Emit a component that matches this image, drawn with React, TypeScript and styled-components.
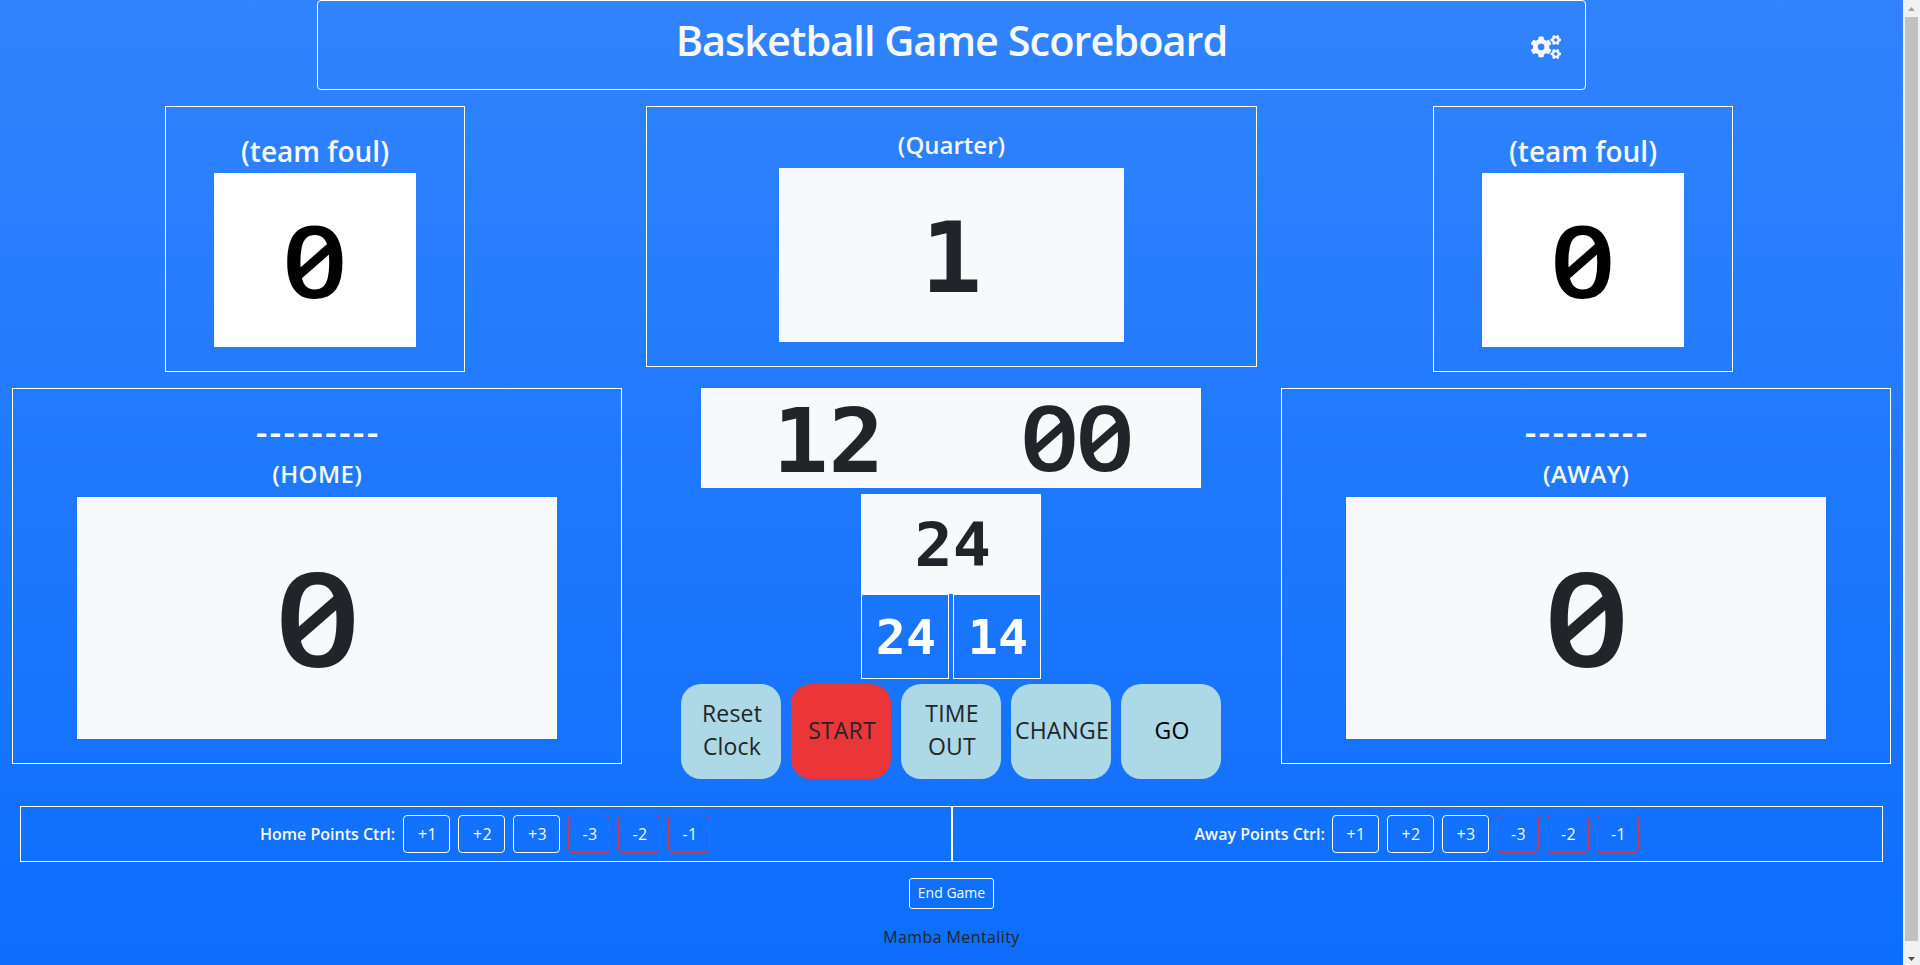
import React from "react";
import styled, { createGlobalStyle } from "styled-components";
import { FaCogs } from "react-icons/fa";

const GlobalStyle = createGlobalStyle`
  *, *::before, *::after { box-sizing: border-box; }
  html, body { margin: 0; height: 965px; overflow: hidden; }
  body {
    font-family: "Open Sans", "Noto Sans", sans-serif;
    font-size: 16px;
    line-height: 1.5;
    color: #212529;
  }
  button { font-family: inherit; }
`;

const Window = styled.div`
  display: flex;
  height: 965px;
  width: 1920px;
`;

const Page = styled.main`
  width: 1903px;
  height: 965px;
  display: flex;
  flex-direction: column;
  align-items: center;
  background: #0d6efd linear-gradient(180deg, rgba(255, 255, 255, 0.15), rgba(255, 255, 255, 0));
`;

const ScrollTrack = styled.div`
  width: 17px;
  height: 965px;
  background: #f1f1f1;
  display: flex;
  flex-direction: column;
  align-items: center;
  justify-content: space-between;
  padding: 7px 0 4px;
`;

const ScrollThumb = styled.div`
  width: 13px;
  height: 924px;
  margin: 6px 0 auto;
  background: #c1c1c1;
`;

const Arrow = styled.svg<{ $color: string }>`
  display: block;
  width: 7px;
  height: 4px;
  fill: ${(p) => p.$color};
`;

const Header = styled.header`
  width: 1269px;
  height: 90px;
  border: 1px solid #fff;
  border-radius: 4px;
  display: grid;
  grid-template-columns: 80px 1fr 80px;
  color: #f8f9fa;
`;

const Title = styled.h1`
  grid-column: 2;
  margin: 0;
  padding-top: 14px;
  text-align: center;
  font-size: 41.5px;
  line-height: 50px;
  font-weight: 600;
  letter-spacing: -1px;
`;

const Settings = styled.div`
  padding: 34px 0 0 26px;
  line-height: 0;
`;

const SettingsIcon = styled(FaCogs)`
  width: 30px;
  height: 24px;
`;

const TopRow = styled.section`
  width: 1903px;
  display: grid;
  grid-template-columns: 630px 643px 620px;
  justify-items: center;
  align-items: start;
  margin-top: 16px;
`;

const Panel = styled.div<{ $w: number; $h: number; $pt: number }>`
  width: ${(p) => p.$w}px;
  height: ${(p) => p.$h}px;
  padding-top: ${(p) => p.$pt}px;
  border: 1px solid #fff;
  display: flex;
  flex-direction: column;
  align-items: center;
  color: #f8f9fa;
`;

const Label = styled.div<{ $size: number; $h: number; $lh: number; $ls?: number }>`
  font-size: ${(p) => p.$size}px;
  line-height: ${(p) => p.$lh}px;
  letter-spacing: ${(p) => p.$ls ?? 0}px;
  padding-left: ${(p) => p.$ls ?? 0}px;
  height: ${(p) => p.$h}px;
  font-weight: 600;
  white-space: pre;
`;

const Display = styled.div<{ $w: number; $h: number; $white?: boolean; $border?: boolean }>`
  width: ${(p) => p.$w}px;
  height: ${(p) => p.$h}px;
  background: ${(p) => (p.$white ? "#fff" : "#f8f9fa")};
  color: ${(p) => (p.$white ? "#000" : "#212529")};
  border: ${(p) => (p.$border ? "1px solid #fff" : "0")};
  display: flex;
  justify-content: space-around;
  align-items: center;
`;

const Digits = styled.span<{ $size: number; $shift?: number; $nudge?: number }>`
  font-family: "DejaVu Sans Mono", monospace;
  font-weight: 700;
  font-size: ${(p) => p.$size}px;
  line-height: 1;
  display: inline-flex;
  padding-top: ${(p) => p.$shift ?? 0}px;
  padding-left: ${(p) => p.$nudge ?? 0}px;
  transform: scaleX(1.04);
`;

const Zeros = styled.span<{ $size: number; $lift: number }>`
  font-family: "Open Sans", sans-serif;
  font-feature-settings: "zero" 1;
  font-weight: 600;
  font-size: ${(p) => p.$size}px;
  line-height: 1;
  display: inline-block;
  padding-bottom: ${(p) => p.$lift}px;
  letter-spacing: -0.03em;
  margin-right: 0.03em;
  transform: scaleX(1.14);
`;

const MiddleRow = styled.section`
  width: 1879px;
  display: flex;
  justify-content: space-between;
  align-items: flex-start;
  margin-top: 16px;
  height: 391px;
`;

const Center = styled.div`
  display: flex;
  flex-direction: column;
  align-items: center;
  margin-right: 1px;
`;

const ShotClock = styled.div`
  margin-top: 6px;
`;

const ShotButtons = styled.div`
  display: flex;
  gap: 4px;
`;

const ShotButton = styled.button`
  width: 88px;
  height: 85px;
  padding: 0;
  border: 1px solid #fff;
  background: transparent;
  color: #fff;
`;

const Actions = styled.div`
  display: flex;
  gap: 10px;
  margin-top: 5px;
`;

const Action = styled.button<{ $bg?: string; $color?: string }>`
  width: 100px;
  height: 95px;
  padding: 0 0 3px 2px;
  border: 0;
  border-radius: 20px;
  background: ${(p) => p.$bg ?? "#add8e6"};
  color: ${(p) => p.$color ?? "#212529"};
  font-size: 23px;
  line-height: 33px;
  letter-spacing: 0.2px;
  white-space: pre;
`;

const Controls = styled.section`
  width: 1863px;
  height: 56px;
  display: flex;
  margin-top: 27px;
`;

const Control = styled.div<{ $pl: number }>`
  flex: 0 0 50%;
  border: 1px solid #fff;
  display: flex;
  align-items: center;
  padding-left: ${(p) => p.$pl}px;
  color: #f8f9fa;
`;

const ControlLabel = styled.span<{ $w: number }>`
  width: ${(p) => p.$w}px;
  font-weight: 600;
  white-space: nowrap;
`;

const Point = styled.button<{ $minus?: boolean }>`
  width: ${(p) => (p.$minus ? 42 : 47)}px;
  height: 38px;
  margin-right: 8px;
  padding: 0 0 0 2px;
  border: 1px solid ${(p) => (p.$minus ? "#dc3545" : "#f8f9fa")};
  border-radius: 4px;
  background: transparent;
  color: #f8f9fa;
  font-size: 16px;
  letter-spacing: 0.4px;
`;

const EndGame = styled.button`
  width: 85px;
  height: 31px;
  margin-top: 16px;
  padding: 0 0 2px;
  border: 1px solid #f8f9fa;
  border-radius: 3px;
  background: transparent;
  color: #f8f9fa;
  font-size: 14px;
`;

const Footer = styled.footer`
  margin-top: 16px;
  letter-spacing: 0.4px;
`;

const TeamFoul = () => (
  <Panel $w={300} $h={266} $pt={24}>
    <Label $size={28} $h={42} $lh={41}>(team foul)</Label>
    <Display $w={202} $h={174} $white>
      <Zeros $size={100} $lift={3}>0</Zeros>
    </Display>
  </Panel>
);

const Team = ({ side }: { side: string }) => (
  <Panel $w={610} $h={376} $pt={24}>
    <Label $size={36} $h={42} $lh={37} $ls={2.3}>---------</Label>
    <Label $size={24} $h={42} $lh={38} $ls={0.4}>{side}</Label>
    <Display $w={480} $h={242}>
      <Zeros $size={131} $lift={4}>0</Zeros>
    </Display>
  </Panel>
);

const PointControl = ({ label, w, pl }: { label: string; w: number; pl: number }) => (
  <Control $pl={pl}>
    <ControlLabel $w={w}>{label}</ControlLabel>
    {["+1", "+2", "+3"].map((t) => <Point key={t}>{t}</Point>)}
    {["-3", "-2", "-1"].map((t) => <Point key={t} $minus>{t}</Point>)}
  </Control>
);

export default function App() {
  return (
    <>
      <GlobalStyle />
      <Window>
        <Page>
          <Header>
            <Title>Basketball Game Scoreboard</Title>
            <Settings><SettingsIcon /></Settings>
          </Header>
          <TopRow>
            <TeamFoul />
            <Panel $w={611} $h={261} $pt={17}>
              <Label $size={24} $h={44} $lh={41}>(Quarter)</Label>
              <Display $w={345} $h={174}><Digits $size={98} $shift={6}>1</Digits></Display>
            </Panel>
            <TeamFoul />
          </TopRow>
          <MiddleRow>
            <Team side="(HOME)" />
            <Center>
              <Display $w={500} $h={100} $border>
                <Digits $size={89} $shift={7}>12</Digits>
                <Zeros $size={90} $lift={4}>00</Zeros>
              </Display>
              <ShotClock>
                <Display $w={180} $h={100} $border><Digits $size={61} $shift={1} $nudge={3}>24</Digits></Display>
                <ShotButtons>
                  <ShotButton><Digits $size={48} $nudge={1}>24</Digits></ShotButton>
                  <ShotButton><Digits $size={48} $nudge={1}>14</Digits></ShotButton>
                </ShotButtons>
              </ShotClock>
              <Actions>
                <Action>{"Reset\nClock"}</Action>
                <Action $bg="#eb3639">START</Action>
                <Action>{"TIME\nOUT"}</Action>
                <Action>CHANGE</Action>
                <Action $color="#000">GO</Action>
              </Actions>
            </Center>
            <Team side="(AWAY)" />
          </MiddleRow>
          <Controls>
            <PointControl label="Home Points Ctrl:" w={143} pl={239} />
            <PointControl label="Away Points Ctrl:" w={137} pl={242} />
          </Controls>
          <EndGame>End Game</EndGame>
          <Footer>Mamba Mentality</Footer>
        </Page>
        <ScrollTrack>
          <Arrow $color="#a3a3a3" viewBox="0 0 7 4"><path d="M0 4L3.5 0L7 4Z" /></Arrow>
          <ScrollThumb />
          <Arrow $color="#505050" viewBox="0 0 7 4"><path d="M0 0L3.5 4L7 0Z" /></Arrow>
        </ScrollTrack>
      </Window>
    </>
  );
}
